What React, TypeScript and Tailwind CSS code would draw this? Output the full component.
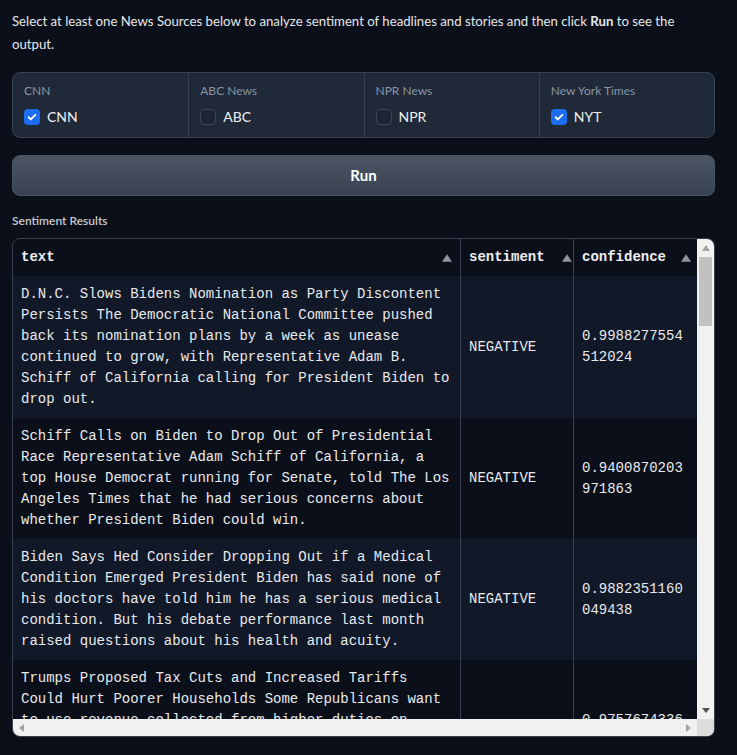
import React from "react";

const sources = [
  { label: "CNN", name: "CNN", checked: true },
  { label: "ABC News", name: "ABC", checked: false },
  { label: "NPR News", name: "NPR", checked: false },
  { label: "New York Times", name: "NYT", checked: true },
];

const rows = [
  {
    lines: [
      "D.N.C. Slows Bidens Nomination as Party Discontent",
      "Persists The Democratic National Committee pushed",
      "back its nomination plans by a week as unease",
      "continued to grow, with Representative Adam B.",
      "Schiff of California calling for President Biden to",
      "drop out.",
    ],
    sentiment: "NEGATIVE",
    conf: "0.9988277554512024",
  },
  {
    lines: [
      "Schiff Calls on Biden to Drop Out of Presidential",
      "Race Representative Adam Schiff of California, a",
      "top House Democrat running for Senate, told The Los",
      "Angeles Times that he had serious concerns about",
      "whether President Biden could win.",
    ],
    sentiment: "NEGATIVE",
    conf: "0.9400870203971863",
  },
  {
    lines: [
      "Biden Says Hed Consider Dropping Out if a Medical",
      "Condition Emerged President Biden has said none of",
      "his doctors have told him he has a serious medical",
      "condition. But his debate performance last month",
      "raised questions about his health and acuity.",
    ],
    sentiment: "NEGATIVE",
    conf: "0.9882351160049438",
  },
  {
    lines: [
      "Trumps Proposed Tax Cuts and Increased Tariffs",
      "Could Hurt Poorer Households Some Republicans want",
      "to use revenue collected from higher duties on",
      "imports to pay for tax cuts, but economists say",
      "lower-income families would bear the brunt of the",
      "higher prices.",
    ],
    sentiment: "NEGATIVE",
    conf: "0.9757674336433411",
  },
];

function Check() {
  return (
    <svg width="10" height="10" viewBox="0 0 12 12" fill="none">
      <path d="M2 6.3l2.6 2.6L10 3.4" stroke="white" strokeWidth="2.2" strokeLinecap="round" strokeLinejoin="round" />
    </svg>
  );
}

function Tri({ dir, color, size = 8 }: { dir: "up" | "down" | "left" | "right"; color: string; size?: number }) {
  const pts: Record<string, string> = {
    up: "4,1 8,7 0,7",
    down: "0,1 8,1 4,6",
    left: "6,0 6,8 1,4",
    right: "1,0 1,8 6,4",
  };
  return (
    <svg width={size} height={size} viewBox="0 0 8 8">
      <polygon points={pts[dir]} fill={color} />
    </svg>
  );
}

export default function App() {
  return (
    <div className="min-h-screen bg-[#0b0f19] font-['Lato','Noto_Sans',sans-serif] text-[#e5e7eb]">
      <div className="w-[703px] ml-3 pt-[10px]">
        <p className="text-[13.2px] leading-[23px]">
          Select at least one News Sources below to analyze sentiment of headlines and stories and then click{" "}
          <b>Run</b> to see the output.
        </p>

        <div className="mt-[16px] grid grid-cols-4 rounded-lg border border-[#374151] bg-[#1f2937] h-[66px]">
          {sources.map((s, i) => (
            <div key={s.name} className={`pl-[11px] pt-[10px] ${i > 0 ? "border-l border-[#374151]" : ""}`}>
              <div className="text-[12px] leading-[16px] text-[#8b95a5]">{s.label}</div>
              <div className="mt-[9px] flex items-center gap-[7px]">
                {s.checked ? (
                  <div className="w-[16px] h-[16px] rounded-[4px] bg-[#1b6ef3] flex items-center justify-center">
                    <Check />
                  </div>
                ) : (
                  <div className="w-[16px] h-[16px] rounded-[4px] border border-[#3b4657] bg-[#1c2533]" />
                )}
                <span className="text-[14px] leading-[18px] text-[#eef0f3]">{s.name}</span>
              </div>
            </div>
          ))}
        </div>

        <div className="mt-[17px] h-[41px] rounded-lg border border-[#4b5563] bg-gradient-to-b from-[#4b5563] to-[#374151] flex items-center justify-center text-[15px] font-bold text-white">
          Run
        </div>

        <div className="mt-[17px] text-[12px] leading-[16px] font-semibold text-[#c5cad2]">Sentiment Results</div>

        <div className="mt-[9px] h-[499px] rounded-lg border border-[#374151] overflow-hidden flex flex-col font-['Liberation_Mono',monospace] text-[14px]">
          <div className="flex flex-1 min-h-0">
            <div className="w-[684px] overflow-hidden">
              <div className="grid grid-cols-[447px_113px_124px] h-[37px] bg-[#0b0f19] font-bold text-[#eef0f3]">
                <div className="flex items-center justify-between pl-2 pr-[8px]">
                  <span>text</span>
                  <Tri dir="up" color="#8d94a0" size={10} />
                </div>
                <div className="flex items-center justify-between pl-2 pr-[1px] border-l border-[#374151]">
                  <span>sentiment</span>
                  <Tri dir="up" color="#8d94a0" size={10} />
                </div>
                <div className="flex items-center justify-between pl-2 pr-[6px] border-l border-[#374151]">
                  <span>confidence</span>
                  <Tri dir="up" color="#8d94a0" size={10} />
                </div>
              </div>
              {rows.map((r, i) => (
                <div
                  key={i}
                  className={`grid grid-cols-[447px_113px_124px] leading-[21px] text-[#e8eaee] ${i % 2 === 0 ? "bg-[#111827]" : "bg-[#0b0f19]"}`}
                >
                  <div className="px-2 py-2">
                    {r.lines.map((l, j) => (
                      <div key={j} className="whitespace-pre">{l}</div>
                    ))}
                  </div>
                  <div className="px-2 border-l border-[#374151] flex items-center">{r.sentiment}</div>
                  <div className="pl-2 pr-[8px] border-l border-[#374151] flex items-center">
                    <span className="break-all">{r.conf}</span>
                  </div>
                </div>
              ))}
            </div>
            <div className="w-[17px] bg-[#f1f1f1] flex flex-col items-center">
              <div className="h-[17px] flex items-center justify-center">
                <Tri dir="up" color="#a3a3a3" />
              </div>
              <div className="w-[13px] h-[69px] bg-[#c1c1c1] mt-[1px]" />
              <div className="flex-1" />
              <div className="h-[17px] flex items-center justify-center">
                <Tri dir="down" color="#505050" />
              </div>
            </div>
          </div>
          <div className="h-[17px] flex bg-[#f1f1f1]">
            <div className="w-[17px] flex items-center justify-center">
              <Tri dir="left" color="#a3a3a3" />
            </div>
            <div className="flex-1" />
            <div className="w-[17px] flex items-center justify-center">
              <Tri dir="right" color="#a3a3a3" />
            </div>
            <div className="w-[17px] bg-[#dcdcdc]" />
          </div>
        </div>
      </div>
    </div>
  );
}
